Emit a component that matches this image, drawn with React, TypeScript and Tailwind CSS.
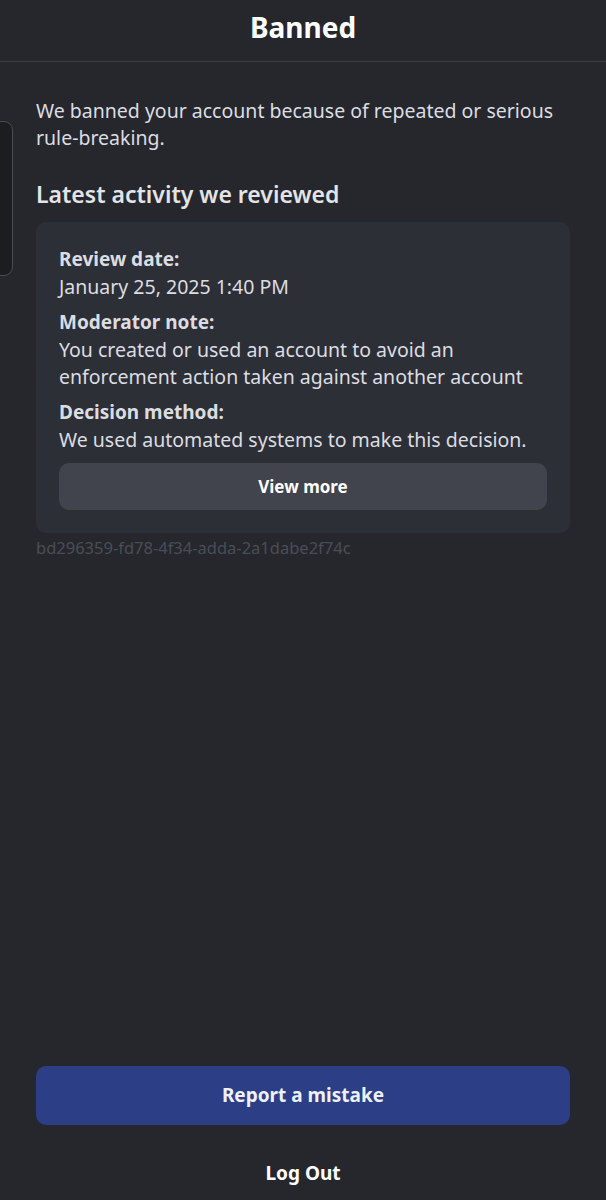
import React from "react";

const font = { fontFamily: '"Noto Sans", "Open Sans", sans-serif' };

export default function App() {
  return (
    <div
      className="relative flex h-[1200px] w-full flex-col overflow-hidden bg-[#25272d] text-[#dcdde2]"
      style={font}
    >
      {/* Header */}
      <header className="flex h-[62px] shrink-0 items-center justify-center border-b border-[#3b3d44] pb-[7px]">
        <h1 className="text-[28px] font-bold leading-[34px] text-white">Banned</h1>
      </header>

      {/* Drawer handle peeking from the left */}
      <div className="absolute left-[-10px] top-[121px] h-[155px] w-[23px] rounded-[9px] border border-[#4a4c53] bg-[#1c1d21]" />

      <main className="flex flex-1 flex-col px-[36px] pt-[35px]">
        <p className="text-[19.5px] leading-[27px] text-[#dcdde2]">
          We banned your account because of repeated or serious rule-breaking.
        </p>

        <h2 className="mt-[28px] text-[23px] font-semibold leading-[30px] text-[#e3e4e8]">
          Latest activity we reviewed
        </h2>

        <section className="mt-[13px] rounded-[10px] bg-[#2d2f36] px-[23px] pb-[23px] pt-[23px]">
          <div className="flex flex-col gap-[8px]">
            <div>
              <div className="text-[19px] font-bold leading-[28px] text-[#dcdde2]">Review date:</div>
              <div className="text-[19.5px] leading-[27px]">January 25, 2025 1:40 PM</div>
            </div>
            <div>
              <div className="text-[19px] font-bold leading-[28px] text-[#dcdde2]">Moderator note:</div>
              <div className="text-[19.5px] leading-[27px]">
                You created or used an account to avoid an enforcement action taken against another account
              </div>
            </div>
            <div>
              <div className="text-[19px] font-bold leading-[28px] text-[#dcdde2]">Decision method:</div>
              <div className="text-[19.5px] leading-[27px]">
                We used automated systems to make this decision.
              </div>
            </div>
          </div>
          <button className="mt-[10px] flex h-[47px] w-full items-center justify-center rounded-[10px] bg-[#41434d] text-[17px] font-bold text-white">
            View more
          </button>
        </section>

        <div className="mt-[3px] text-[16.5px] leading-[24px] text-[#4b4d56]">bd296359-fd78-4f34-adda-2a1dabe2f74c</div>

        <div className="flex-1" />

        <button className="flex h-[59px] w-full shrink-0 items-center justify-center rounded-[10px] bg-[#2b3e86] text-[19px] font-bold text-[#eef0fa]">
          Report a mistake
        </button>
        <button className="mb-[15px] mt-[36px] flex h-[24px] items-center justify-center self-center text-[19px] font-bold text-white">
          Log Out
        </button>
      </main>
    </div>
  );
}
